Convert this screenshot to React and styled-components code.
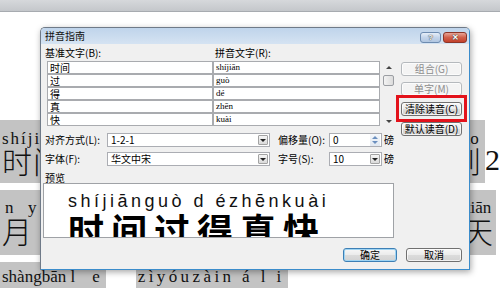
import React from 'react';
import styled, { createGlobalStyle } from 'styled-components';

const GlobalStyle = createGlobalStyle`
  html, body { margin: 0; padding: 0; width: 500px; height: 288px; overflow: hidden; background: #fff; }
  #root { width: 500px; height: 288px; }
  * { box-sizing: border-box; }
`;

const Screen = styled.div`
  position: relative;
  width: 500px;
  height: 288px;
  overflow: hidden;
  background: #fff;
  font-family: "Liberation Serif", "Noto Sans CJK SC", serif;
`;

const Ribbon = styled.div`
  height: 12px;
  background: linear-gradient(#d6d8db, #c4c7cb);
  border-bottom: 1px solid #a7abb0;
`;

const DocPage = styled.div`
  display: flex;
  flex-direction: column;
  gap: 7px;
  padding-top: 108px;
  width: 500px;
`;

const DocRow = styled.div`
  display: flex;
  justify-content: ${(p) => p.$justify || 'space-between'};
  gap: ${(p) => p.$gap || 0}px;
  align-items: flex-start;
`;

/* a window onto a highlighted run of text that the dialog partly hides */
const Clip = styled.div`
  width: ${(p) => p.$w}px;
  overflow: hidden;
  display: flex;
  justify-content: ${(p) => (p.$end ? 'flex-end' : 'flex-start')};
  flex-shrink: 0;
  margin-right: ${(p) => p.$mr || 0}px;
  background: #c3c3c3;
`;

const Group = styled.div`
  display: flex;
  align-items: flex-start;
`;

const Ruby = styled.div`
  flex-shrink: 0;
  display: flex;
  flex-direction: column;
  align-items: ${(p) => (p.$center ? 'center' : 'flex-start')};
  background: #c3c3c3;
  padding: ${(p) => p.$top}px ${(p) => p.$right ?? 2}px ${(p) => p.$bottom}px ${(p) => p.$left ?? 2}px;
`;

const Pinyin = styled.span`
  font-family: "Liberation Serif", serif;
  font-size: 17px;
  line-height: 15px;
  white-space: pre;
  letter-spacing: ${(p) => p.$spacing || 0}px;
  margin-left: ${(p) => p.$indent || 0}px;
  color: #111;
`;

const Hanzi = styled.span`
  font-family: "Noto Sans CJK SC", sans-serif;
  font-weight: 300;
  font-size: 30px;
  line-height: 28px;
  letter-spacing: 1px;
  margin-top: ${(p) => p.$gap || 0}px;
  white-space: nowrap;
  color: #111;
`;

const Digit = styled.span`
  font-family: "Liberation Serif", serif;
  font-size: 30px;
  line-height: 28px;
  margin-top: 26px;
  color: #111;
`;

/* ---------- dialog ---------- */

const Dialog = styled.div`
  position: absolute;
  left: 40px;
  top: 27px;
  width: 430px;
  height: 243px;
  border: 1px solid #6f7a88;
  border-right-color: #3b8ccb;
  border-bottom-color: #3b8ccb;
  border-radius: 5px 5px 0 0;
  background: #f0f0f0;
  box-shadow: 1px 2px 6px rgba(0, 0, 0, 0.35);
  display: flex;
  flex-direction: column;
  font-family: "Noto Sans CJK SC", "Liberation Sans", sans-serif;
  font-size: 10px;
  color: #000;
`;

const TitleBar = styled.div`
  height: 16px;
  display: flex;
  justify-content: space-between;
  align-items: center;
  padding: 0 2px 0 4px;
  background: linear-gradient(#bfd4eb, #d5e3f2);
  border-radius: 4px 4px 0 0;
`;

const Title = styled.span`
  font-size: 10px;
  line-height: 12px;
  color: #111;
`;

const TitleButtons = styled.div`
  display: flex;
  gap: 2px;
  align-self: flex-end;
  margin-bottom: 1px;
`;

const CaptionButton = styled.div`
  width: ${(p) => (p.$close ? 24 : 21)}px;
  height: 11px;
  border: 1px solid ${(p) => (p.$close ? '#8c3528' : '#6d8bb0')};
  border-radius: 3px;
  background: ${(p) =>
    p.$close
      ? 'linear-gradient(#e9a597, #d1604b 50%, #c4412c)'
      : 'linear-gradient(#e6eef8, #c3d4ea 50%, #b1c6e0)'};
  display: flex;
  align-items: center;
  justify-content: center;
  font-family: "Liberation Sans", sans-serif;
  font-weight: bold;
  font-size: 8px;
  line-height: 9px;
  color: #fff;
  text-shadow: 0 0 1px #333, 0 0 1px #333;
`;

const Body = styled.div`
  flex: 1;
  display: grid;
  grid-template-columns: 350px 61px;
  grid-template-rows: auto auto auto auto auto;
  column-gap: 6px;
  align-content: start;
  padding: 3px 6px 0 4px;
`;

const LeftPanel = styled.div`
  grid-column: 1;
  grid-row: 1;
  display: flex;
  flex-direction: column;
`;

const FieldHeaders = styled.div`
  display: grid;
  grid-template-columns: 170px 1fr;
  height: 11px;
  line-height: 11px;
`;

const TableWrap = styled.div`
  display: flex;
  gap: 2px;
  margin: 3px 0 0 2px;
`;

const Table = styled.div`
  display: grid;
  grid-template-columns: 166px 167px;
  grid-auto-rows: 13px;
`;

const Cell = styled.div`
  height: 13px;
  border: 1px solid #a9abaf;
  background: #fff;
  padding-left: 2px;
  font-family: ${(p) => (p.$pinyin ? '"Liberation Serif", serif' : '"Noto Sans CJK SC", sans-serif')};
  font-size: ${(p) => (p.$pinyin ? 9 : 10)}px;
  line-height: 11px;
  white-space: nowrap;
  overflow: hidden;
`;

const ScrollBar = styled.div`
  width: 13px;
  height: 65px;
  display: flex;
  flex-direction: column;
  align-items: center;
  background: #f0f0f0;
`;

const ScrollArrow = styled.div`
  width: 0;
  height: 0;
  margin: ${(p) => (p.$down ? 'auto 0 3px' : '5px 0 0')};
  border-left: 3px solid transparent;
  border-right: 3px solid transparent;
  ${(p) => (p.$down ? 'border-top: 3px solid #444;' : 'border-bottom: 3px solid #444;')}
`;

const ScrollThumb = styled.div`
  width: 11px;
  height: 11px;
  margin-top: 6px;
  border: 1px solid #9b9ea3;
  border-radius: 2px;
  background: linear-gradient(90deg, #f3f3f3, #dcdcdc);
`;

const ButtonColumn = styled.div`
  grid-column: 2;
  grid-row: 1 / span 2;
  display: flex;
  flex-direction: column;
  gap: 6px;
  padding-top: 15px;
`;

const Button = styled.div`
  width: ${(p) => p.$w || 61}px;
  height: 14px;
  border: 1px solid ${(p) => (p.$disabled ? '#b5b9bd' : p.$default ? '#3d7fb5' : '#707070')};
  border-radius: 3px;
  background: ${(p) =>
    p.$disabled ? '#f4f4f4' : 'linear-gradient(#f7f7f7, #ebebeb 50%, #dcdcdc 51%, #d2d2d2)'};
  box-shadow: ${(p) => (p.$default ? 'inset 0 0 0 1px #9fd4f3' : 'inset 0 0 0 1px rgba(255,255,255,0.7)')};
  color: ${(p) => (p.$disabled ? '#8d8d8d' : '#000')};
  font-size: 10px;
  line-height: 12px;
  text-align: center;
  white-space: nowrap;
`;

const Marked = styled.div`
  position: relative;
  &::after {
    content: '';
    position: absolute;
    left: -5px;
    right: -5px;
    top: -7px;
    bottom: -6px;
    border: 3px solid #e3121b;
  }
`;

const Controls = styled.div`
  grid-column: 1;
  grid-row: 2;
  margin-top: 7px;
  display: grid;
  grid-template-columns: 62px 163px 59px 53px auto;
  grid-auto-rows: 14px;
  row-gap: 5px;
  align-items: center;
`;

const Label = styled.span`
  padding-left: ${(p) => p.$indent || 0}px;
  line-height: 12px;
  white-space: nowrap;
`;

const Field = styled.div`
  height: 14px;
  border: 1px solid #abadb3;
  background: #fff;
  display: flex;
  align-items: center;
  justify-content: space-between;
  padding-left: 3px;
  font-size: 10px;
  line-height: 12px;
`;

const DropButton = styled.div`
  width: 10px;
  height: 10px;
  margin-right: 1px;
  border: 1px solid #a3a3a3;
  border-radius: 1px;
  background: linear-gradient(#f6f6f6, #dadada);
  display: flex;
  align-items: center;
  justify-content: center;
  &::before {
    content: '';
    border-left: 3px solid transparent;
    border-right: 3px solid transparent;
    border-top: 3px solid #222;
  }
`;

const Spinner = styled.div`
  width: 10px;
  height: 12px;
  margin-right: 1px;
  display: flex;
  flex-direction: column;
  align-items: center;
  justify-content: center;
  gap: 2px;
  background: linear-gradient(#f4f7fb, #e1e8f1);
`;

const SpinArrow = styled.div`
  width: 0;
  height: 0;
  border-left: 3px solid transparent;
  border-right: 3px solid transparent;
  ${(p) => (p.$down ? 'border-top: 3px solid #6b8fbf;' : 'border-bottom: 3px solid #6b8fbf;')}
`;

const Unit = styled.span`
  padding-left: 2px;
  line-height: 12px;
`;

const PreviewLabel = styled.div`
  grid-column: 1;
  grid-row: 3;
  margin-top: 7px;
  height: 10px;
  line-height: 10px;
`;

const PreviewBox = styled.div`
  grid-column: 1;
  grid-row: 4;
  margin-left: -2px;
  width: 351px;
  height: 55px;
  border: 1px solid #9fa2a6;
  background: #fff;
  overflow: hidden;
  padding: 8px 0 0 24px;
  display: flex;
  flex-direction: column;
  align-items: flex-start;
`;

const PreviewPinyin = styled.div`
  font-family: "Liberation Sans", sans-serif;
  font-size: 18px;
  line-height: 18px;
  letter-spacing: 3.5px;
  white-space: pre;
  color: #111;
`;

const PreviewHanzi = styled.div`
  margin-top: 1px;
  font-family: "Noto Sans CJK SC", sans-serif;
  font-weight: 700;
  font-size: 36px;
  line-height: 36px;
  letter-spacing: 7px;
  white-space: nowrap;
  color: #000;
`;

const Footer = styled.div`
  grid-column: 1 / -1;
  grid-row: 5;
  margin-top: 10px;
  display: flex;
  justify-content: flex-end;
  gap: 9px;
`;

const rows = [
  ['时间', 'shíjiān'],
  ['过', 'guò'],
  ['得', 'dé'],
  ['真', 'zhēn'],
  ['快', 'kuài'],
];

export default function App() {
  return (
    <>
      <GlobalStyle />
      <Screen>
        <Ribbon />
        <DocPage>
          <DocRow>
            <Clip $w={41}>
              <Ruby $top={11} $bottom={9}>
                <Pinyin $spacing={2}>shíji</Pinyin>
                <Hanzi>时间</Hanzi>
              </Ruby>
            </Clip>
            <Group>
              <Clip $w={16} $end>
                <Ruby $top={11} $bottom={9} $center $right={3}>
                  <Pinyin>dào</Pinyin>
                  <Hanzi>到</Hanzi>
                </Ruby>
              </Clip>
              <Digit>2</Digit>
            </Group>
          </DocRow>
          <DocRow>
            <Clip $w={41}>
              <Ruby $top={10} $bottom={11}>
                <Pinyin $spacing={2} $indent={3}>n  y</Pinyin>
                <Hanzi $gap={1}>月</Hanzi>
              </Ruby>
            </Clip>
            <Clip $w={27} $end $mr={4}>
              <Ruby $top={10} $bottom={11} $center>
                <Pinyin>tiān</Pinyin>
                <Hanzi $gap={1}>天</Hanzi>
              </Ruby>
            </Clip>
          </DocRow>
          <DocRow $justify="flex-start" $gap={30}>
            <Ruby $top={7} $bottom={10} $right={6} $left={2}>
              <Pinyin>{'shàngbān l    e'}</Pinyin>
            </Ruby>
            <Ruby $top={7} $bottom={10} $right={3} $left={2}>
              <Pinyin $spacing={3.4}>{'zìyóuzàin á l i'}</Pinyin>
            </Ruby>
          </DocRow>
        </DocPage>

        <Dialog>
          <TitleBar>
            <Title>拼音指南</Title>
            <TitleButtons>
              <CaptionButton>?</CaptionButton>
              <CaptionButton $close>✕</CaptionButton>
            </TitleButtons>
          </TitleBar>
          <Body>
            <LeftPanel>
              <FieldHeaders>
                <span>基准文字(B):</span>
                <span>拼音文字(R):</span>
              </FieldHeaders>
              <TableWrap>
                <Table>
                  {rows.map(([base, py]) => (
                    <React.Fragment key={base}>
                      <Cell>{base}</Cell>
                      <Cell $pinyin>{py}</Cell>
                    </React.Fragment>
                  ))}
                </Table>
                <ScrollBar>
                  <ScrollArrow />
                  <ScrollThumb />
                  <ScrollArrow $down />
                </ScrollBar>
              </TableWrap>
            </LeftPanel>
            <ButtonColumn>
              <Button $disabled>组合(G)</Button>
              <Button $disabled>单字(M)</Button>
              <Marked>
                <Button>清除读音(C)</Button>
              </Marked>
              <Button>默认读音(D)</Button>
            </ButtonColumn>
            <Controls>
              <Label>对齐方式(L):</Label>
              <Field>
                1-2-1
                <DropButton />
              </Field>
              <Label $indent={8}>偏移量(O):</Label>
              <Field>
                0
                <Spinner>
                  <SpinArrow />
                  <SpinArrow $down />
                </Spinner>
              </Field>
              <Unit>磅</Unit>
              <Label>字体(F):</Label>
              <Field>
                华文中宋
                <DropButton />
              </Field>
              <Label $indent={8}>字号(S):</Label>
              <Field>
                10
                <DropButton />
              </Field>
              <Unit>磅</Unit>
            </Controls>
            <PreviewLabel>预览</PreviewLabel>
            <PreviewBox>
              <PreviewPinyin>shíjiānguò d ézhēnkuài</PreviewPinyin>
              <PreviewHanzi>时间过得真快</PreviewHanzi>
            </PreviewBox>
            <Footer>
              <Button $w={54} $default>确定</Button>
              <Button $w={56}>取消</Button>
            </Footer>
          </Body>
        </Dialog>
      </Screen>
    </>
  );
}
